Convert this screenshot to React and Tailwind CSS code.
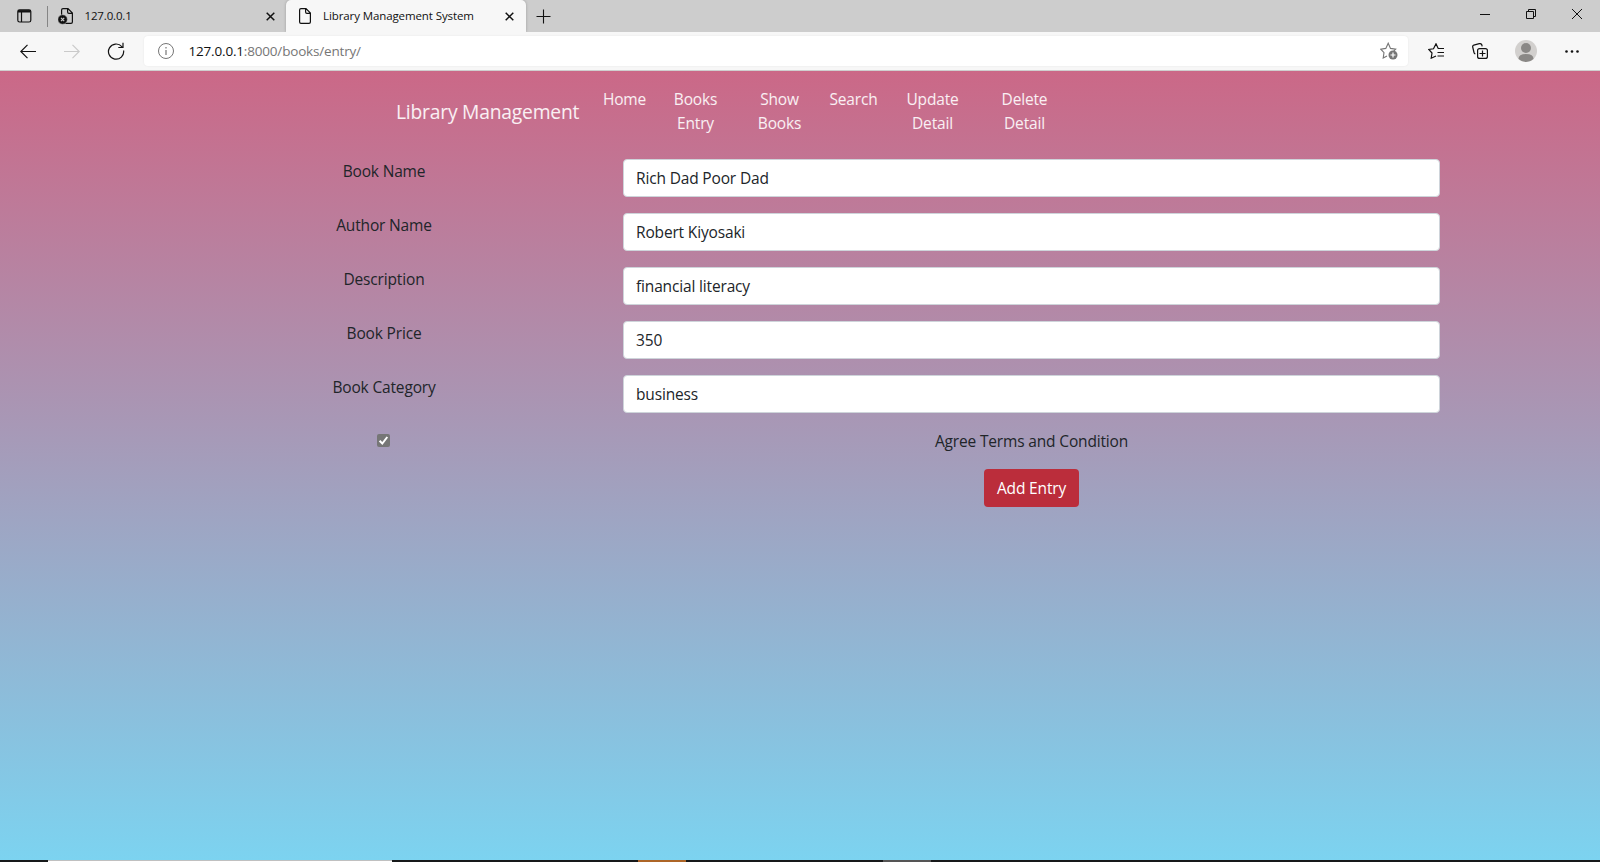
import React from "react";

const fields = [
  { label: "Book Name", value: "Rich Dad Poor Dad" },
  { label: "Author Name", value: "Robert Kiyosaki" },
  { label: "Description", value: "financial literacy" },
  { label: "Book Price", value: "350" },
  { label: "Book Category", value: "business" },
];

const navItems = [
  { text: "Home", width: "w-[71px]" },
  { text: "Books Entry", width: "w-[71px]" },
  { text: "Show Books", width: "w-[97px]" },
  { text: "Search", width: "w-[51px]" },
  { text: "Update Detail", width: "w-[107px]" },
  { text: "Delete Detail", width: "w-[77px]" },
];

function TabClose() {
  return (
    <svg className="size-[9px]" viewBox="0 0 9 9" fill="none" stroke="#111" strokeWidth="1.5">
      <path d="M.7.7l7.6 7.6M8.3.7L.7 8.3" />
    </svg>
  );
}

function PageIcon({ blocked }) {
  return (
    <svg className="h-[18px] w-[16px]" viewBox="0 0 16 18" fill="none" stroke="#111" strokeWidth="1.2">
      <path d="M5 1.600h5l4.400 4.400v9q0 1.400-1.400 1.400H5q-1.400 0-1.400-1.400V3Q3.600 1.600 5 1.600zM9.600 1.600V5q0 1.300 1.300 1.300h3.500" />
      {blocked && (
        <>
          <circle cx="4.600" cy="12.500" r="4.800" fill="#111" stroke="#cdcdcd" strokeWidth=".6" />
          <path d="M3 10.900l3.200 3.200M6.200 10.900L3 14.100" stroke="#cdcdcd" strokeWidth="1.200" />
        </>
      )}
    </svg>
  );
}

function TabStrip() {
  return (
    <div className="flex h-8 shrink-0 bg-[#cdcdcd] text-[11.5px] text-[#111]">
      <div className="flex w-[47px] items-center pl-[17px]">
        <svg className="h-[14px] w-[15px]" viewBox="0 0 15 14" fill="none" stroke="#111" strokeWidth="1.200">
          <rect x=".8" y=".8" width="13" height="12.200" rx="1.800" />
          <path d="M1 2.300h12.600" strokeWidth="2.400" />
          <path d="M4.500 3v10" />
        </svg>
      </div>
      <div className="mt-[6px] h-[21px] w-px bg-[#858585]" />
      <div className="flex w-[238px] items-center pl-[10px] pr-[11.500px]">
        <PageIcon blocked />
        <span className="ml-[10.500px] flex-1 tracking-[-0.15px]">127.0.0.1</span>
        <TabClose />
      </div>
      <div className="flex w-[240px] items-center rounded-t-[5px] bg-[#f7f7f7] pl-[10px] pr-[12px] shadow-[0_0_3px_rgba(0,0,0,0.25)] [clip-path:inset(0_-3px_0_-3px)]">
        <PageIcon />
        <span className="ml-[11px] flex-1 whitespace-nowrap tracking-[-0.1px]">Library Management System</span>
        <TabClose />
      </div>
      <div className="flex w-[35px] items-center justify-center">
        <svg className="size-[15px]" viewBox="0 0 15 15" stroke="#111" strokeWidth="1.100">
          <path d="M7.500.5v14M.5 7.500h14" />
        </svg>
      </div>
      <div className="flex flex-1 items-center justify-end gap-9 pr-[18px] pb-1">
        <svg className="size-[10px]" viewBox="0 0 10 10" stroke="#111">
          <path d="M0 5.500h10" />
        </svg>
        <svg className="size-[10px]" viewBox="0 0 10 10" fill="none" stroke="#111">
          <path d="M.5 2.500h7v7h-7zM2.500 2.500v-2h7v7h-2" />
        </svg>
        <svg className="size-[10px]" viewBox="0 0 10 10" stroke="#111">
          <path d="M0 0l10 10M10 0L0 10" />
        </svg>
      </div>
    </div>
  );
}

function Toolbar() {
  return (
    <div className="flex h-[39px] shrink-0 items-center border-b border-[#cfcfcf] bg-[#f7f7f7]">
      <div className="flex w-[144px] items-center pl-5">
        <svg className="h-[15px] w-4" viewBox="0 0 16 15" fill="none" stroke="#111" strokeWidth="1.200">
          <path d="M16 7.500H.8M7.500.8L.8 7.500l6.700 6.700" />
        </svg>
        <svg className="ml-7 h-[15px] w-4" viewBox="0 0 16 15" fill="none" stroke="#cacaca" strokeWidth="1.200">
          <path d="M0 7.500h15.200M8.500.8l6.700 6.700-6.700 6.700" />
        </svg>
        <svg className="ml-[27px] size-[18px]" viewBox="0 0 18 18" fill="none" stroke="#111" strokeWidth="1.200">
          <path d="M16.600 8.500A7.600 7.600 0 1 1 14.800 4.600L15.800 5.500M16 .8v4.700h-4.700" />
        </svg>
      </div>
      <div className="flex h-[30px] w-[1264px] items-center rounded bg-white pl-[14px] pr-[10px] shadow-[0_0_2px_rgba(0,0,0,0.08)]">
        <svg className="size-4" viewBox="0 0 16 16" fill="none" stroke="#767676">
          <circle cx="8" cy="8" r="7.500" />
          <path d="M8 7v5M8 4v1.500" strokeWidth="1.200" />
        </svg>
        <span className="ml-[14.500px] flex-1 text-[13.500px] tracking-[-0.18px] text-[#767676]">
          <span className="text-[#111]">127.0.0.1</span>:8000/books/entry/
        </span>
        <svg className="h-[18px] w-[18px]" viewBox="0 0 18 18" fill="none" stroke="#767676" strokeWidth="1.100">
          <path d="M7 14l-3.800 2 .8-5.300L.8 7.200 5.800 6.400 8.200 1.200l2.300 5.200 5.200.8-2 2" />
          <circle cx="13" cy="13" r="4.500" fill="#767676" stroke="none" />
          <path d="M13 10.500v5M10.500 13h5" stroke="#fff" strokeWidth="1.200" />
        </svg>
      </div>
      <div className="flex flex-1 items-center pl-[20px]">
        <svg className="h-[16px] w-[16px]" viewBox="0 0 16 16" fill="none" stroke="#111" strokeWidth="1.200">
          <path d="M8 13l-4.800 2.200.8-5.200L.8 6.500l4.700-.7L8 .8l2.200 4.700H16M9.500 9.500H16M9.500 13H16" />
        </svg>
        <svg className="ml-7 size-4" viewBox="0 0 16 16" fill="none" stroke="#111" strokeWidth="1.200">
          <path d="M3.300 10.800Q2.300 10.600 2 9.500L.7 4Q.4 2.500 1.800 2.100L7.300.7Q9 .3 9.700 1.600l.5 1.800" />
          <rect x="5.600" y="5.600" width="9.800" height="9.800" rx="2" />
          <path d="M10.500 7.500v6M7.500 10.500h6" />
        </svg>
        <svg className="ml-[27px] size-[22px]" viewBox="0 0 22 22">
          <circle cx="11" cy="11" r="11" fill="#d2d0ce" />
          <circle cx="11" cy="8" r="5" fill="#8a8886" />
          <path d="M3.500 19q0-5 7.500-5t7.500 5a11 11 0 0 1-15 0z" fill="#8a8886" />
        </svg>
        <svg className="ml-[28px] h-[3px] w-[14px]" viewBox="0 0 14 3" fill="#111">
          <circle cx="1.500" cy="1.500" r="1.300" />
          <circle cx="7" cy="1.500" r="1.300" />
          <circle cx="12.500" cy="1.500" r="1.300" />
        </svg>
      </div>
    </div>
  );
}

export default function App() {
  return (
    <div className="flex h-[862px] w-[1600px] flex-col overflow-hidden font-['Open_Sans',sans-serif]">
      <TabStrip />
      <Toolbar />
      <main className="flex h-[789px] flex-col bg-[linear-gradient(180deg,#cb6887,#7cd3f0)] text-[15.500px] leading-6 tracking-[-0.16px] text-[#212529]">
        <nav className="flex h-[88px] pt-4 pl-[396px] text-[#fff]/90">
          <div className="w-[193px] pt-[10px] text-[19.300px] leading-[30px] tracking-[-0.22px] whitespace-nowrap">
            Library Management
          </div>
          {navItems.map((item) => (
            <a key={item.text} className={`flex justify-center text-center ${item.width}`}>
              <span className="w-min">{item.text}</span>
            </a>
          ))}
        </nav>
        <form className="flex flex-col gap-4 pr-[160px] pl-[145px]">
          {fields.map((field) => (
            <div key={field.label} className="flex">
              <label className="w-[478px] text-center">{field.label}</label>
              <input
                className="h-[38px] flex-1 rounded border border-[#ced4da] bg-white px-3 tracking-[-0.16px] outline-none"
                defaultValue={field.value}
              />
            </div>
          ))}
          <div className="flex">
            <div className="flex w-[477px] justify-center pt-[5px]">
              <svg className="size-[13px]" viewBox="0 0 13 13">
                <rect width="13" height="13" rx="2" fill="#767676" />
                <path d="M2.600 6.800l2.700 2.700 5-6.500" fill="none" stroke="#fff" strokeWidth="2" />
              </svg>
            </div>
            <div className="flex flex-1 flex-col items-center gap-4 pl-px">
              <span>Agree Terms and Condition</span>
              <button type="button" className="h-[38px] w-[95px] rounded bg-[#bb2d3b] text-white">
                Add Entry
              </button>
            </div>
          </div>
        </form>
      </main>
      <footer className="flex h-[2px] bg-[#17191a]">
        <div className="ml-12 w-[344px] border-t border-[#c0c0c0] bg-white" />
        <div className="ml-[246px] w-12 bg-[#ad6527]" />
        <div className="ml-[197px] w-12 bg-[#555]" />
      </footer>
    </div>
  );
}
